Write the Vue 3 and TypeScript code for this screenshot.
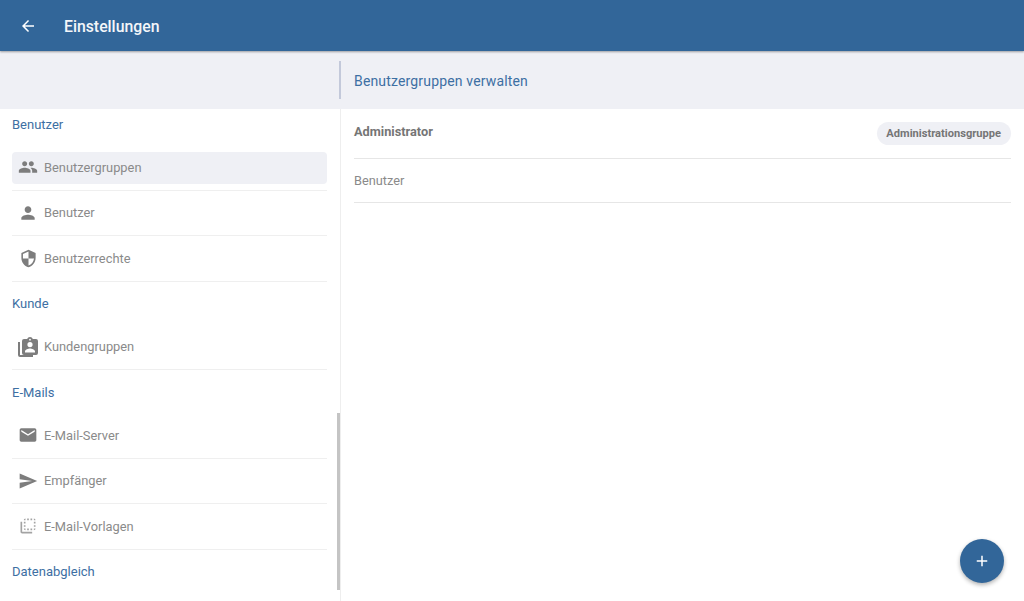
<script setup lang="ts">
interface MenuItem {
  label: string;
  icon: string;
  iconClass?: string;
  active?: boolean;
}
interface MenuSection {
  title: string;
  items: MenuItem[];
}

const icons = {
  group:
    "M16 11c1.66 0 2.99-1.34 2.99-3S17.66 5 16 5c-1.66 0-3 1.34-3 3s1.34 3 3 3zm-8 0c1.66 0 2.99-1.34 2.99-3S9.66 5 8 5C6.34 5 5 6.34 5 8s1.34 3 3 3zm0 2c-2.33 0-7 1.17-7 3.5V19h14v-2.5c0-2.33-4.67-3.5-7-3.5zm8 0c-.29 0-.62.02-.97.05 1.16.84 1.97 1.97 1.97 3.45V19h6v-2.5c0-2.33-4.67-3.5-7-3.5z",
  person:
    "M12 12c2.21 0 4-1.79 4-4s-1.79-4-4-4-4 1.79-4 4 1.79 4 4 4zm0 2c-2.67 0-8 1.34-8 4v2h16v-2c0-2.66-5.33-4-8-4z",
  shield:
    "M12 1L3 5v6c0 5.55 3.84 10.74 9 12 5.16-1.26 9-6.45 9-12V5l-9-4zm0 10.99h7c-.53 4.12-3.28 7.79-7 8.94V12H5V6.3l7-3.11v8.8z",
  clipboard:
    "M2 7h2v13h13v2H4a2 2 0 0 1-2-2zM8 4h3.2C11.6 2.8 12.7 2 14 2s2.4.8 2.8 2H20a2 2 0 0 1 2 2v12a2 2 0 0 1-2 2H8a2 2 0 0 1-2-2V6a2 2 0 0 1 2-2zm6-.2a.9.9 0 1 0 0 1.8.9.9 0 0 0 0-1.8zM14 7a2.6 2.6 0 1 0 0 5.2A2.6 2.6 0 0 0 14 7zm-5 10.6h10v-1.2c0-1.9-3.3-2.9-5-2.9s-5 1-5 2.9z",
  mail:
    "M20 4H4c-1.1 0-1.99.9-1.99 2L2 18c0 1.1.9 2 2 2h16c1.1 0 2-.9 2-2V6c0-1.1-.9-2-2-2zm0 4l-8 5-8-5V6l8 5 8-5v2z",
  send: "M2.01 21L23 12 2.01 3 2 10l15 2-15 2z",
  flip:
    "M9 7H7v2h2V7zm0 4H7v2h2v-2zm0-8c-1.11 0-2 .9-2 2h2V3zm4 12h-2v2h2v-2zm6-12v2h2c0-1.1-.9-2-2-2zm-6 0h-2v2h2V3zM9 17v-2H7c0 1.1.89 2 2 2zm10-4h2v-2h-2v2zm0-4h2V7h-2v2zm0 8c1.1 0 2-.9 2-2h-2v2zM5 7H3v12c0 1.1.89 2 2 2h12v-2H5V7zm10-2h2V3h-2v2zm0 12h2v-2h-2v2z",
};

const sections: MenuSection[] = [
  {
    title: "Benutzer",
    items: [
      { label: "Benutzergruppen", icon: icons.group, active: true },
      { label: "Benutzer", icon: icons.person },
      { label: "Benutzerrechte", icon: icons.shield, iconClass: "small" },
    ],
  },
  {
    title: "Kunde",
    items: [{ label: "Kundengruppen", icon: icons.clipboard, iconClass: "large" }],
  },
  {
    title: "E-Mails",
    items: [
      { label: "E-Mail-Server", icon: icons.mail },
      { label: "Empfänger", icon: icons.send },
      { label: "E-Mail-Vorlagen", icon: icons.flip, iconClass: "faint" },
    ],
  },
  { title: "Datenabgleich", items: [] },
];

const groups = [
  { name: "Administrator", badge: "Administrationsgruppe", bold: true },
  { name: "Benutzer", badge: "", bold: false },
];
</script>

<template>
  <div class="page">
    <header class="topbar">
      <svg class="back" viewBox="0 0 24 24"><path d="M20 11H7.83l5.59-5.59L12 4l-8 8 8 8 1.41-1.41L7.83 13H20v-2z" /></svg>
      <h1 class="title">Einstellungen</h1>
    </header>

    <div class="band">
      <div class="band-left"></div>
      <div class="band-right">
        <span class="band-mark"></span>
        <span class="band-title">Benutzergruppen verwalten</span>
      </div>
    </div>

    <div class="content">
      <nav class="sidebar">
        <div class="menu">
          <section v-for="section in sections" :key="section.title">
            <div class="section-title">{{ section.title }}</div>
            <div v-for="item in section.items" :key="item.label" class="item">
              <div class="item-inner" :class="{ active: item.active }">
                <svg class="item-icon" :class="item.iconClass" viewBox="0 0 24 24"><path fill-rule="evenodd" :d="item.icon" /></svg>
                <span>{{ item.label }}</span>
              </div>
            </div>
          </section>
        </div>
        <span class="scrollbar"></span>
      </nav>

      <main class="main">
        <div v-for="group in groups" :key="group.name" class="row" :class="{ first: group.bold }">
          <span class="row-name" :class="{ bold: group.bold }">{{ group.name }}</span>
          <span v-if="group.badge" class="chip">{{ group.badge }}</span>
        </div>
      </main>
    </div>

    <button class="fab">
      <svg viewBox="0 0 24 24"><path d="M19 13h-6v6h-2v-6H5v-2h6V5h2v6h6v2z" /></svg>
    </button>
  </div>
</template>

<style>
  html,
  body {
    margin: 0;
    background: #fff;
  }
</style>

<style scoped>
  .page {
    position: relative;
    width: 1024px;
    height: 601px;
    overflow: hidden;
    display: flex;
    flex-direction: column;
    font-family: Roboto, "Liberation Sans", sans-serif;
    background: #fff;
  }
  .topbar {
    flex: none;
    height: 51px;
    display: flex;
    align-items: center;
    background: #326699;
    box-shadow: 0 1px 2px rgba(0, 0, 0, 0.35);
    position: relative;
    z-index: 1;
  }
  .back {
    width: 18px;
    height: 18px;
    margin-left: 19px;
    fill: #fff;
  }
  .title {
    margin: 2px 0 0 27px;
    font-size: 15.8px;
    font-weight: 500;
    color: #f4f6f9;
  }
  .band {
    flex: none;
    height: 58px;
    display: flex;
    background: #eff0f5;
  }
  .band-left {
    width: 339px;
  }
  .band-right {
    position: relative;
    flex: 1;
    display: flex;
    align-items: center;
    padding-left: 15px;
  }
  .band-mark {
    position: absolute;
    left: 0;
    top: 10px;
    width: 2px;
    height: 38px;
    background: #c3c9da;
  }
  .band-title {
    margin-top: 2px;
    font-size: 14px;
    letter-spacing: 0.16px;
    color: #3d6fa3;
  }
  .content {
    flex: 1;
    display: flex;
    min-height: 0;
  }
  .sidebar {
    position: relative;
    width: 340px;
    flex: none;
    overflow: hidden;
    border-right: 1px solid #eeeeee;
  }
  .menu {
    margin-top: -7px;
  }
  .section-title {
    height: 43px;
    box-sizing: border-box;
    padding: 1px 0 0 12px;
    display: flex;
    align-items: center;
    font-size: 13px;
    color: #3d6fa3;
  }
  .item {
    height: 45.5px;
    box-sizing: border-box;
    margin: 0 13px 0 12px;
    padding: 7px 0 6px;
    border-bottom: 1px solid #efefef;
  }
  .item-inner {
    height: 32px;
    box-sizing: border-box;
    padding: 0 0 2px 6px;
    display: flex;
    align-items: center;
    gap: 6px;
    border-radius: 4px;
    font-size: 12.85px;
    color: #8a8a8a;
  }
  .item-inner.active {
    background: #eff0f5;
  }
  .item-icon {
    width: 20px;
    height: 20px;
    flex: none;
    fill: #7d7d7d;
  }
  .item-icon.small {
    width: 19px;
    height: 19px;
    margin: 0 0.5px;
  }
  .item-icon.large {
    width: 24px;
    height: 24px;
    margin: 0 -2px;
  }
  .item-icon.faint {
    fill: #a3a3a3;
  }
  .scrollbar {
    position: absolute;
    right: 0;
    top: 304px;
    width: 3px;
    height: 177px;
    background: #c4c4c4;
  }
  .main {
    flex: 1;
    padding: 0 13px;
  }
  .row {
    height: 44px;
    box-sizing: border-box;
    display: flex;
    align-items: center;
    justify-content: space-between;
    border-bottom: 1px solid #e6e6e6;
  }
  .row.first {
    height: 50px;
  }
  .row-name {
    font-size: 12.75px;
    color: #8a8a8a;
  }
  .row-name.bold {
    font-weight: 700;
    color: #757575;
    margin-bottom: 5px;
  }
  .chip {
    height: 23px;
    line-height: 23px;
    padding: 0 10px 0 9px;
    border-radius: 12px;
    background: #eff0f5;
    font-size: 11.1px;
    font-weight: 700;
    color: #757575;
  }
  .fab {
    position: absolute;
    left: 960px;
    top: 539px;
    width: 44px;
    height: 44px;
    padding: 0;
    border: none;
    border-radius: 50%;
    background: #326699;
    box-shadow: 0 2px 4px rgba(0, 0, 0, 0.3);
    display: flex;
    align-items: center;
    justify-content: center;
  }
  .fab svg {
    width: 18px;
    height: 18px;
    fill: #fff;
  }
</style>
